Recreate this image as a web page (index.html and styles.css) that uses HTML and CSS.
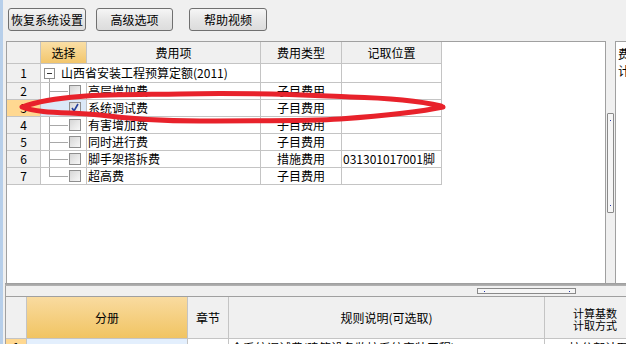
FILE: index.html
```html
<!DOCTYPE html>
<html lang="zh-CN">
<head>
	<meta charset="UTF-8">
	<title>费用设置</title>
	<link rel="stylesheet" href="styles.css">
</head>
<body>
	<div class="page">
		<div class="edge"></div>
		<div class="main">
			<div class="toolbar">
				<a href="javascript:;" class="btn">恢复系统设置</a>
				<a href="javascript:;" class="btn btn2">高级选项</a>
				<a href="javascript:;" class="btn btn3">帮助视频</a>
			</div>

			<div class="middle">
				<div class="grid">
					<div class="row head">
						<div class="c num"></div>
						<div class="c sel-head">选择</div>
						<div class="c">费用项</div>
						<div class="c">费用类型</div>
						<div class="c">记取位置</div>
					</div>
					<div class="row first">
						<div class="c num">1</div>
						<div class="c root"><span class="fold"></span>山西省安装工程预算定额(2011)</div>
						<div class="c"></div>
						<div class="c"></div>
					</div>
					<div class="row">
						<div class="c num">2</div>
						<div class="c tree"><span class="cb"></span></div>
						<div class="c name">高层增加费</div>
						<div class="c type">子目费用</div>
						<div class="c"></div>
					</div>
					<div class="row cur">
						<div class="c num">3</div>
						<div class="c tree"><span class="cb"><svg width="10" height="10" viewBox="0 0 10 10"><path d="M2 5 L4 8 L8 1" fill="none" stroke="#23409c" stroke-width="1.6"/></svg></span></div>
						<div class="c name">系统调试费</div>
						<div class="c type">子目费用</div>
						<div class="c"></div>
					</div>
					<div class="row">
						<div class="c num">4</div>
						<div class="c tree"><span class="cb"></span></div>
						<div class="c name">有害增加费</div>
						<div class="c type">子目费用</div>
						<div class="c"></div>
					</div>
					<div class="row">
						<div class="c num">5</div>
						<div class="c tree"><span class="cb"></span></div>
						<div class="c name">同时进行费</div>
						<div class="c type">子目费用</div>
						<div class="c"></div>
					</div>
					<div class="row">
						<div class="c num">6</div>
						<div class="c tree"><span class="cb"></span></div>
						<div class="c name">脚手架搭拆费</div>
						<div class="c type">措施费用</div>
						<div class="c pos">031301017001脚</div>
					</div>
					<div class="row">
						<div class="c num">7</div>
						<div class="c tree last"><span class="cb"></span></div>
						<div class="c name">超高费</div>
						<div class="c type">子目费用</div>
						<div class="c"></div>
					</div>
				</div>
				<div class="vscroll"><div class="thumb"></div></div>
				<div class="side">费<br>计</div>
			</div>

			<div class="splitter"></div>
			<div class="hscroll"><div class="hthumb"></div></div>

			<div class="bottom">
				<div class="brow bhead">
					<div class="b"></div>
					<div class="b fen">分册</div>
					<div class="b">章节</div>
					<div class="b">规则说明(可选取)</div>
					<div class="b calc">计算基数<br>计取方式</div>
				</div>
				<div class="brow bdata">
					<div class="b bnum">1</div>
					<div class="b bfen"></div>
					<div class="b">1</div>
					<div class="b rule">全系统调试费(建筑设备监控系统安装工程)</div>
					<div class="b">按分部计取</div>
				</div>
			</div>
		</div>
	</div>

	<!-- 手绘的红圈标注 -->
	<svg class="mark" width="626" height="344" viewBox="0 0 626 344">
		<path d="M441 106 C420 101 390 98 350 97 C300 95 250 92 180 94 C120 95 60 93 22 107 C40 114 70 112 100 115 C130 119 160 121 200 121 C260 121 310 121 340 119 C380 116 420 112 443 107" fill="none" stroke="#e8222b" stroke-width="5" stroke-linecap="round" stroke-linejoin="round"/>
	</svg>
</body>
</html>
```

FILE: styles.css
```css
*{margin: 0;padding: 0;box-sizing: border-box;}
body{width: 626px;height: 344px;overflow: hidden;background: #f0f0f0;font-family: "Noto Sans CJK SC", sans-serif;font-size: 12px;color: #000;position: relative;}
.page{display: flex;height: 344px;}
.edge{width: 3px;background: #b7cfea;flex-shrink: 0;}
.main{flex: 1;padding-left: 3px;display: flex;flex-direction: column;min-width: 0;}

/* 顶部按钮 */
.toolbar{height: 41px;display: flex;align-items: flex-start;padding: 8px 0 0 2px;}
.btn{display: block;width: 78px;height: 23px;line-height: 21px;text-align: center;text-decoration: none;color: #000;border: 1px solid #707070;border-radius: 3px;background: linear-gradient(#f6f6f6, #e6e6e6 50%, #dcdcdc);}
.btn2{margin-left: 10px;width: 77px;}
.btn3{margin-left: 16px;}

/* 上表 */
.middle{height: 242px;display: flex;}
.grid{width: 600px;flex-shrink: 0;background: #fff;border: 1px solid #a0a0a0;border-bottom: 0;}
.row{display: grid;grid-template-columns: 34px 46px 174px 81px 100px;height: 17px;}
.row .c{border-right: 1px solid #c4c4c4;border-bottom: 1px solid #c4c4c4;line-height: 16px;white-space: nowrap;overflow: hidden;}
.head{height: 22px;}
.head .c{background: #f0f0f0;text-align: center;line-height: 21px;}
.head .sel-head{background: linear-gradient(#fadfa6, #f2c66c);}
.first{height: 19px;}
.first .c{line-height: 18px;}
.num{background: #f0f0f0;text-align: center;}
.cur .num{background: #ffd891;}
.cur .tree{background: #dce9f8;}
.root{grid-column: span 2;display: flex;align-items: center;padding-left: 3px;background: linear-gradient(#a8a8a8, #a8a8a8) no-repeat 8px 14px / 1px 5px;}
.fold{width: 11px;height: 11px;border: 1px solid #8c8c8c;background: linear-gradient(#333, #333) no-repeat 2px 4px / 5px 1px, #fff;margin-right: 6px;}
.tree{display: flex;align-items: center;padding-left: 28px;background: linear-gradient(#a8a8a8, #a8a8a8) no-repeat 8px 0 / 1px 100%, linear-gradient(#a8a8a8, #a8a8a8) no-repeat 8px 8px / 19px 1px;}
.tree.last{background: linear-gradient(#a8a8a8, #a8a8a8) no-repeat 8px 0 / 1px 9px, linear-gradient(#a8a8a8, #a8a8a8) no-repeat 8px 8px / 19px 1px;}
.cb{width: 12px;height: 12px;border: 1px solid #8e8e8e;background: linear-gradient(135deg, #d6d6d6, #f7f7f7);display: flex;align-items: center;justify-content: center;}
.name{padding-left: 1px;}
.type{padding-left: 16px;}
.pos{padding-left: 1px;}

.vscroll{width: 9px;flex-shrink: 0;background: #f0f0f0;padding: 72px 1px 0 1px;}
.thumb{width: 7px;height: 100px;border: 1px solid #8a8a8a;border-radius: 1px;background: linear-gradient(#2838a8, #2838a8) no-repeat 2px 6px / 1px 1px, linear-gradient(#2838a8, #2838a8) no-repeat 2px 91px / 1px 1px, #f6f6f6;}
.side{flex: 1;background: #fff;border-left: 1px solid #a0a0a0;border-top: 1px solid #a0a0a0;padding: 3px 0 0 2px;line-height: 17px;}

.splitter{height: 3px;background: linear-gradient(#9c9c9c, #b4b4b4);margin-left: -1px;}
.hscroll{height: 10px;background: #f0f0f0;border-left: 1px solid #a0a0a0;margin-left: -1px;padding: 2px 0 0 471px;}
.hthumb{width: 99px;height: 6px;border: 1px solid #8a8a8a;background: linear-gradient(#2838a8, #2838a8) no-repeat 6px 2px / 1px 1px, linear-gradient(#2838a8, #2838a8) no-repeat 91px 2px / 1px 1px, #f6f6f6;}

/* 下表 */
.bottom{border-top: 1px solid #a0a0a0;border-left: 1px solid #a0a0a0;margin-left: -1px;background: #fff;flex: 1;overflow: hidden;}
.brow{display: grid;grid-template-columns: 21px 161px 41px 316px 101px;}
.b{border-right: 1px solid #c4c4c4;border-bottom: 1px solid #c4c4c4;white-space: nowrap;overflow: hidden;}
.bhead{height: 42px;}
.bhead .b{background: #f0f0f0;display: flex;align-items: center;justify-content: center;}
.bhead .fen{background: linear-gradient(#f9dba0, #f1c462);}
.bhead .calc{font-size: 11px;line-height: 12px;padding-top: 2px;}
.bdata{height: 17px;}
.bdata .b{padding: 1px 0 0 2px;line-height: 16px;}
.bdata .bnum{background: #ffd891;text-align: center;padding: 0;}
.bdata .bfen{background: #e3effd;}
.bdata .rule{padding-left: 2px;}
.bdata .b:last-child{padding-left: 24px;}

.mark{position: absolute;left: 0;top: 0;pointer-events: none;}
```
